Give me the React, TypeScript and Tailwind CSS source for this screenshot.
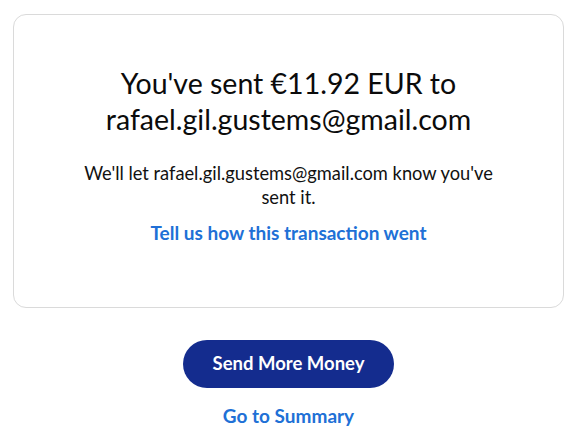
import React from 'react';

const App: React.FC = () => {
  const email = 'rafael.gil.gustems@gmail.com';

  return (
    <div className="min-h-screen bg-white font-['Lato','Noto_Sans',sans-serif] text-[#001435]">
      <div className="px-[13px] pt-[14px]">
        <div className="h-[294px] rounded-[13px] border border-[#dadada] flex flex-col items-center text-center px-6 pt-[50px]">
          <h1 className="text-[28.5px] leading-[36px] text-[#0b0b0b]">
            You've sent €11.92 EUR to
            <br />
            {email}
          </h1>
          <p className="mt-[24px] text-[18.3px] leading-[24px] text-[#111] max-w-[440px]">
            {`We'll let ${email} know you've sent it.`}
          </p>
          <a href="#" className="mt-[12px] text-[19px] leading-[24px] font-bold text-[#2070d6]">
            Tell us how this transaction went
          </a>
        </div>
      </div>

      <div className="flex flex-col items-center pt-[32px]">
        <button className="w-[211px] h-[48px] rounded-full bg-[#142c8e] text-white text-[18.5px] font-bold">
          Send More Money
        </button>
        <a href="#" className="mt-[16px] text-[19px] leading-[24px] font-bold text-[#2070d6]">
          Go to Summary
        </a>
      </div>
    </div>
  );
};

export default App;
